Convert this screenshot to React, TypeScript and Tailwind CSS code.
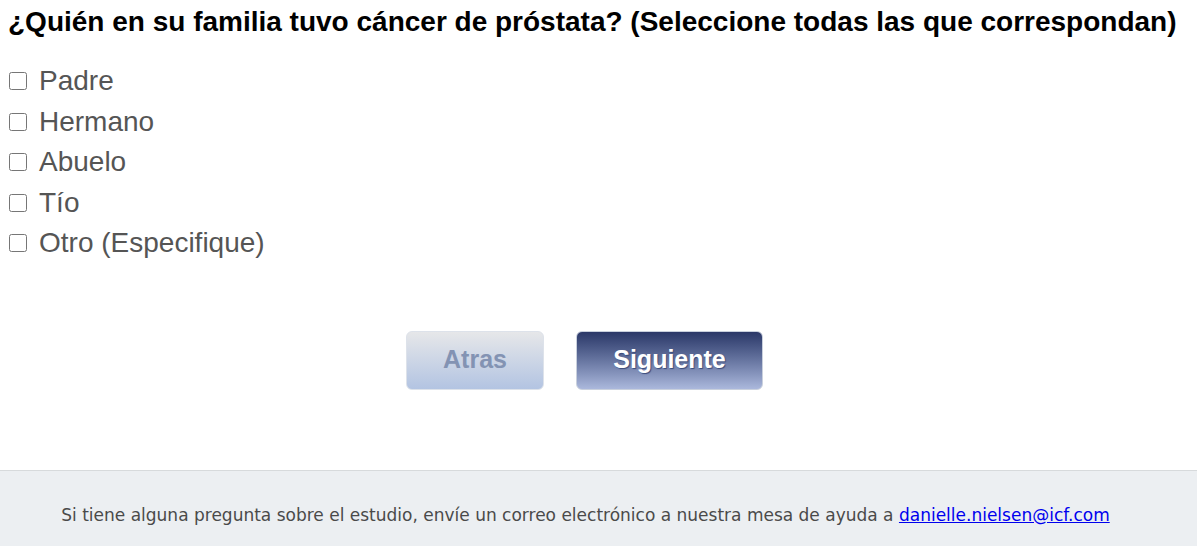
import { useState } from 'react';

const options = ['Padre', 'Hermano', 'Abuelo', 'Tío', 'Otro (Especifique)'];

export default function App() {
  const [checked, setChecked] = useState<string[]>([]);

  const toggle = (opt: string) => {
    setChecked((prev) => (prev.includes(opt) ? prev.filter((o) => o !== opt) : [...prev, opt]));
  };

  return (
    <div className="min-h-[546px] flex flex-col bg-white" style={{ fontFamily: '"Liberation Sans", Arial, sans-serif' }}>
      <div className="flex-1 pl-[8px] pr-[4px]">
        <h1 className="text-[28px] font-bold text-black leading-[32px] pt-[6px] whitespace-nowrap">
          ¿Quién en su familia tuvo cáncer de próstata? (Seleccione todas las que correspondan)
        </h1>

        <ul className="mt-[23px]">
          {options.map((opt) => (
            <li key={opt} className="flex items-center h-[40.5px]">
              <label className="flex items-center cursor-pointer">
                <input
                  type="checkbox"
                  className="w-[18px] h-[18px] ml-[1px] mr-[12px] accent-gray-600"
                  checked={checked.includes(opt)}
                  onChange={() => toggle(opt)}
                />
                <span className="text-[28px] text-[#555555]">{opt}</span>
              </label>
            </li>
          ))}
        </ul>

        <div className="flex justify-center gap-[32px] mt-[67px] mr-[32px]">
          <button className="w-[138px] h-[59px] rounded-[6px] border border-[#dde2ea] bg-gradient-to-b from-[#e6e7e9] to-[#b3c4e2] text-[25px] font-bold text-[#8393b3]">
            Atras
          </button>
          <button className="w-[187px] h-[59px] rounded-[6px] border border-[#c9d0dd] bg-gradient-to-b from-[#2b3868] to-[#abb8dc] text-[25px] font-bold text-white [text-shadow:1px_1px_1px_#3a4a7a]">
            Siguiente
          </button>
        </div>
      </div>

      <footer className="h-[76px] mt-[80px] border-t border-[#d7dadc] bg-[#eceff2] flex items-center justify-center pr-[26px] pt-[14px]">
        <p className="text-[17px] text-[#4a4a4a]" style={{ fontFamily: 'Tahoma, "DejaVu Sans", sans-serif' }}>
          Si tiene alguna pregunta sobre el estudio, envíe un correo electrónico a nuestra mesa de ayuda a{' '}
          <a href="mailto:danielle.nielsen@icf.com" className="text-[#0000ee] underline">
            danielle.nielsen@icf.com
          </a>
        </p>
      </footer>
    </div>
  );
}
